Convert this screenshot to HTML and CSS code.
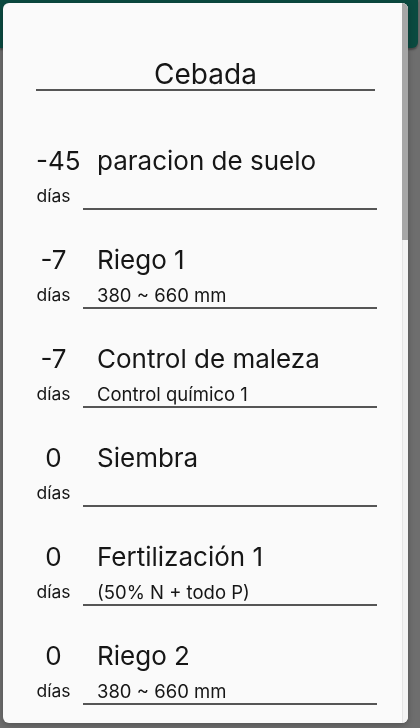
FILE: index.html
```html
<!DOCTYPE html>
<html lang="es">
<head>
<meta charset="utf-8">
<title>Cebada</title>
<link rel="stylesheet" href="styles.css">
</head>
<body>
<header class="appbar"></header>
<section class="dialog">
  <div class="dialog-body">
    <h1 class="title">Cebada</h1>
    <ul class="list">
      <li class="row"><span class="num">-45</span><span class="name">paracion de suelo</span><span class="unit">días</span><span class="sub">&nbsp;</span></li>
      <li class="row"><span class="num">-7</span><span class="name">Riego 1</span><span class="unit">días</span><span class="sub">380 ~ 660 mm</span></li>
      <li class="row"><span class="num">-7</span><span class="name">Control de maleza</span><span class="unit">días</span><span class="sub">Control químico 1</span></li>
      <li class="row"><span class="num">0</span><span class="name">Siembra</span><span class="unit">días</span><span class="sub">&nbsp;</span></li>
      <li class="row"><span class="num">0</span><span class="name">Fertilización 1</span><span class="unit">días</span><span class="sub">(50% N + todo P)</span></li>
      <li class="row"><span class="num">0</span><span class="name">Riego 2</span><span class="unit">días</span><span class="sub">380 ~ 660 mm</span></li>
    </ul>
  </div>
  <div class="scroll-track"><div class="scroll-thumb"></div></div>
</section>
</body>
</html>
```

FILE: styles.css
```css
* { box-sizing: border-box; }

html, body {
  margin: 0;
  height: 100%;
}

body {
  background: #6e6e6e;
  font-family: Inter, "Noto Sans", "Liberation Sans", sans-serif;
  color: #161616;
  overflow: hidden;
}

.appbar {
  height: 48px;
  margin-right: 2px;
  background: #0b4a40;
  border-radius: 0 0 6px 0;
  box-shadow: 0 2px 2px rgba(0, 0, 0, 0.35);
}

.dialog {
  position: fixed;
  left: 3px;
  top: 3px;
  width: 405px;
  height: 720px;
  display: flex;
  background: #fafafa;
  border-radius: 6px;
  overflow: hidden;
  box-shadow: 0 2px 6px rgba(0, 0, 0, 0.25);
}

.dialog-body {
  flex: 1;
  min-width: 0;
  padding: 56px 25px 0 33px;
}

.scroll-track {
  width: 6px;
  flex: none;
  background: #f3f3f3;
  border-left: 1px solid #e4e4e4;
}

.scroll-thumb {
  height: 237px;
  margin-left: -1px;
  background: #a6a6a6;
}

.title {
  margin: 0 2px 0 0;
  font-size: 28px;
  line-height: 30px;
  font-weight: 400;
  text-align: center;
  border-bottom: 2px solid #555;
}

.list {
  list-style: none;
  margin: 55px 0 0;
  padding: 0;
  display: flex;
  flex-direction: column;
  gap: 35px;
}

.row {
  display: grid;
  grid-template-columns: 35px 1fr;
  column-gap: 12px;
}

.num,
.name {
  font-size: 26px;
  line-height: 30px;
  white-space: nowrap;
}

.num {
  text-align: center;
}

.name {
  padding-left: 14px;
}

.unit,
.sub {
  line-height: 22px;
  margin-top: 9px;
  white-space: nowrap;
}

.unit {
  font-size: 17.5px;
  text-align: center;
}

.sub {
  font-size: 18.5px;
  padding: 0 0 1px 14px;
  border-bottom: 2px solid #555;
}
```
